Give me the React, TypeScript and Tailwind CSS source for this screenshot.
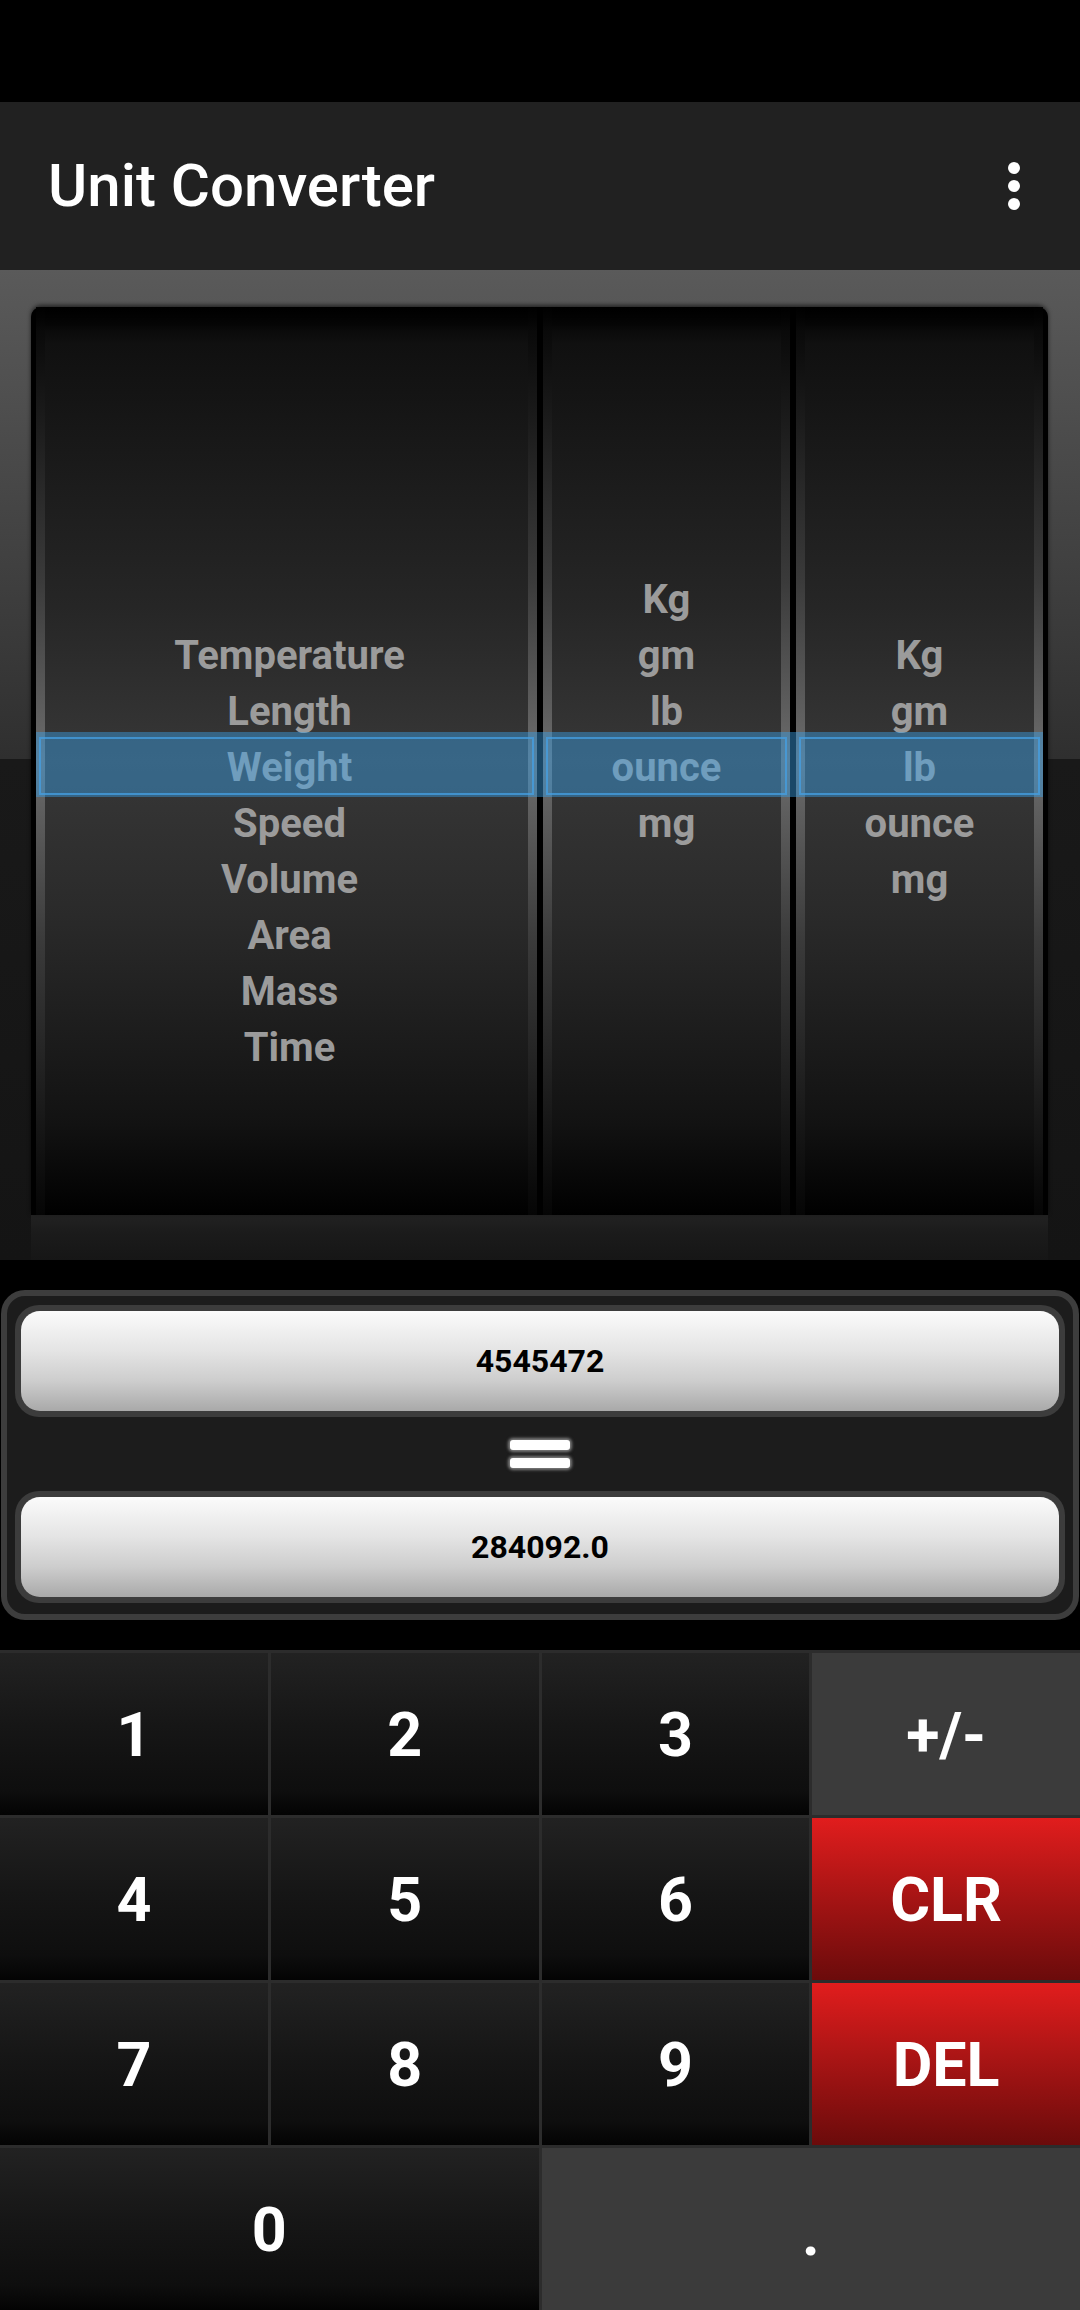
import type { ReactNode } from 'react';

const categories = ['Temperature', 'Length', 'Weight', 'Speed', 'Volume', 'Area', 'Mass', 'Time'];
const fromUnits = ['Kg', 'gm', 'lb', 'ounce', 'mg'];
const toUnits = ['Kg', 'gm', 'lb', 'ounce', 'mg'];

const colBg =
  'bg-[linear-gradient(to_bottom,#000_0%,#101010_4%,#262626_33%,#373737_50%,#2a2a2a_67%,#121212_90%,#000_100%)]';

const stripCls =
  'pointer-events-none absolute inset-y-0 w-[9px] bg-[linear-gradient(to_bottom,#050505_0%,#3a3a3a_30%,#6c6c6c_50%,#3a3a3a_70%,#050505_100%)]';

function Wheel({ items, padTop, className }: { items: string[]; padTop: string; className: string }) {
  return (
    <div className={`relative overflow-hidden ${colBg} ${className}`}>
      <div className={`${stripCls} left-0`} aria-hidden />
      <div className={`${stripCls} right-0`} aria-hidden />
      <ul className={`relative flex flex-col items-center ${padTop}`}>
        {items.map((t) => (
          <li key={t} className="h-[56px] text-[40px] font-bold leading-[56px] text-[#9b9b9b]">
            {t}
          </li>
        ))}
      </ul>
      {/* selection outline for this wheel */}
      <div
        className="absolute inset-x-[3px] top-[430px] h-[58px] border-2 border-[rgba(78,160,225,0.75)]"
        aria-hidden
      />
    </div>
  );
}

function Field({ value }: { value: string }) {
  return (
    <div className="h-[112px] rounded-[24px] bg-[#3c3c3c] p-[6px]">
      <div className="flex h-full items-center justify-center rounded-[19px] bg-[linear-gradient(to_bottom,#fbfbfb_0%,#e4e4e4_40%,#cdcdcd_70%,#a9a9a9_100%)]">
        <span className="text-[32px] font-bold text-black">{value}</span>
      </div>
    </div>
  );
}

type KeyKind = 'num' | 'gray' | 'red';

function Key({ kind = 'num', span, children }: { kind?: KeyKind; span?: boolean; children: ReactNode }) {
  const tone =
    kind === 'red'
      ? 'bg-[linear-gradient(to_bottom,#e11d1d_0%,#a51414_50%,#6b0b0b_100%)]'
      : kind === 'gray'
        ? 'bg-[#3b3b3b]'
        : 'bg-[linear-gradient(to_bottom,#222_0%,#161616_45%,#0e0e0e_85%,#030303_100%)]';
  return (
    <button
      type="button"
      className={`flex items-center justify-center pt-[3px] text-[61px] font-bold leading-none text-white ${tone} ${
        span ? 'col-span-2' : ''
      }`}
    >
      {children}
    </button>
  );
}

export default function App() {
  return (
    <div className="flex h-[2310px] w-[1080px] flex-col bg-black font-['Roboto',sans-serif]">
      <div className="h-[102px] shrink-0 bg-black" />

      <header className="flex h-[168px] shrink-0 items-center justify-between bg-[#212121] pl-[48px] pr-[60px]">
        <h1 className="text-[60px] font-medium leading-none text-white">Unit Converter</h1>
        <div className="flex flex-col gap-[6px]" aria-label="More options">
          <span className="size-[12px] rounded-full bg-white" />
          <span className="size-[12px] rounded-full bg-white" />
          <span className="size-[12px] rounded-full bg-white" />
        </div>
      </header>

      <section className="h-[990px] shrink-0 bg-[linear-gradient(to_bottom,#5a5a5a_0%,#2f2f2f_49.4%,#191919_49.4%,#141414_100%)] pl-[31px] pr-[32px] pt-[37px]">
        <div className="relative flex h-[908px] gap-[6px] rounded-t-[10px] bg-black px-[5px] shadow-[0_-2px_4px_rgba(0,0,0,0.6)]">
          <Wheel items={categories} padTop="pt-[321px] pl-[6px]" className="w-[501px]" />
          <Wheel items={fromUnits} padTop="pt-[265px]" className="w-[247px]" />
          <Wheel items={toUnits} padTop="pt-[321px]" className="w-[247px]" />
          {/* selection band across all wheels */}
          <div
            className="pointer-events-none absolute inset-x-[5px] top-[425px] h-[65px] bg-[rgba(58,160,230,0.45)]"
            aria-hidden
          />
          <div
            className="pointer-events-none absolute inset-x-0 top-0 h-[24px] rounded-t-[10px] bg-[linear-gradient(to_bottom,rgba(0,0,0,0.95),rgba(0,0,0,0))]"
            aria-hidden
          />
        </div>
        <div className="h-[45px] bg-[linear-gradient(to_bottom,#222_0%,#1b1b1b_40%,#161616_100%)]" />
      </section>

      <section className="h-[390px] shrink-0 bg-black px-[1px] pt-[30px]">
        <div className="h-[330px] rounded-[24px] border-[6px] border-[#3d3d3d] bg-[#1c1c1c] px-[8px] pb-[11px] pt-[9px]">
          <Field value="4545472" />
          <div className="flex h-[74px] flex-col items-center justify-center gap-[8px]">
            <span className="h-[10px] w-[60px] rounded-[3px] bg-white shadow-[0_0_3px_2px_rgba(150,150,150,0.8)]" />
            <span className="h-[10px] w-[60px] rounded-[3px] bg-white shadow-[0_0_3px_2px_rgba(150,150,150,0.8)]" />
          </div>
          <Field value="284092.0" />
        </div>
      </section>

      <div className="grid h-[660px] shrink-0 grid-cols-4 grid-rows-4 gap-[3px] bg-[#2c2c2c] pt-[3px]">
        <Key>1</Key>
        <Key>2</Key>
        <Key>3</Key>
        <Key kind="gray">+/-</Key>
        <Key>4</Key>
        <Key>5</Key>
        <Key>6</Key>
        <Key kind="red">CLR</Key>
        <Key>7</Key>
        <Key>8</Key>
        <Key>9</Key>
        <Key kind="red">DEL</Key>
        <Key span>0</Key>
        <Key kind="gray" span>
          <span className="pt-[8px]">.</span>
        </Key>
      </div>
    </div>
  );
}
